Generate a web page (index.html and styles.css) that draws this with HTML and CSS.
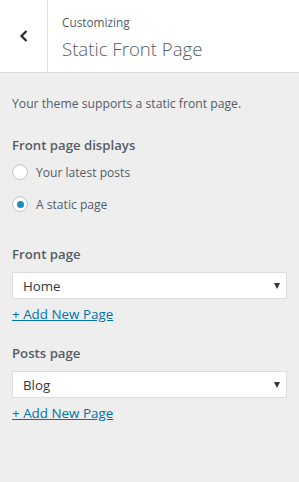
FILE: index.html
```html
<!DOCTYPE html>
<html lang="en">
<head>
  <meta charset="UTF-8" />
  <meta name="viewport" content="width=device-width, initial-scale=1.0"/>
  <title>Static Front Page</title>
  <link rel="stylesheet" href="styles.css">
</head>
<body>
  <header class="panel-head">
    <button class="back" aria-label="Back">
      <svg width="10" height="14" viewBox="0 0 10 14"><path d="M7.5 2 L2.5 7 L7.5 12" fill="none" stroke="#23282d" stroke-width="2.2"/></svg>
    </button>
    <div class="titles">
      <span class="crumb">Customizing</span>
      <h1>Static Front Page</h1>
    </div>
  </header>

  <main class="section">
    <p class="desc">Your theme supports a static front page.</p>

    <div class="control radios">
      <span class="label">Front page displays</span>
      <label class="radio"><input type="radio" name="show"> Your latest posts</label>
      <label class="radio"><input type="radio" name="show" checked> A static page</label>
    </div>

    <div class="control">
      <span class="label">Front page</span>
      <div class="select"><span>Home</span><i class="caret"></i></div>
      <a class="add" href="#">+ Add New Page</a>
    </div>

    <div class="control">
      <span class="label">Posts page</span>
      <div class="select"><span>Blog</span><i class="caret"></i></div>
      <a class="add" href="#">+ Add New Page</a>
    </div>
  </main>
</body>
</html>
```

FILE: styles.css
```css
*{margin:0;padding:0;box-sizing:border-box}
body{font-family:'Open Sans','Noto Sans',sans-serif;background:#eee;color:#555d66;font-size:12.2px;width:299px;height:482px;overflow:hidden}
.panel-head{display:flex;background:#fff;height:73px;border-bottom:1px solid #ddd}
.back{width:48px;border:none;border-right:1px solid #ddd;background:#fff;display:flex;align-items:center;justify-content:center}
.titles{padding:13px 0 0 14px;display:flex;flex-direction:column}
.crumb{font-size:11.8px;line-height:18px}
.titles h1{font-size:18.6px;font-weight:300;line-height:30px;margin-top:3px}
.section{padding:20px 12px}
.desc{line-height:22px;margin-bottom:20px}
.control{display:flex;flex-direction:column;margin-bottom:19px}
.control.radios{margin-bottom:24px}
.label{font-size:13.2px;font-weight:600;line-height:20px;margin-bottom:1px}
.radio{display:flex;align-items:center;gap:8px;height:32px;font-size:12.1px}
.radio input{appearance:none;width:16px;height:16px;border:1px solid #c3c7ca;border-radius:50%;background:#fff;box-shadow:inset 0 1px 2px rgba(0,0,0,.07);display:grid;place-items:center}
.radio input:checked::before{content:"";width:7px;height:7px;border-radius:50%;background:#1e8cbe}
.select{display:flex;align-items:center;justify-content:space-between;height:27px;margin-top:7px;background:#fff;border:1px solid #ddd;padding:0 6px 0 10px;font-size:13.3px;color:#32373c}
.caret{width:0;height:0;border-left:3px solid transparent;border-right:3px solid transparent;border-top:6px solid #32373c}
.add{color:#0073aa;text-decoration:underline;margin-top:5px;line-height:20px;font-size:13.4px;align-self:flex-start}
```
